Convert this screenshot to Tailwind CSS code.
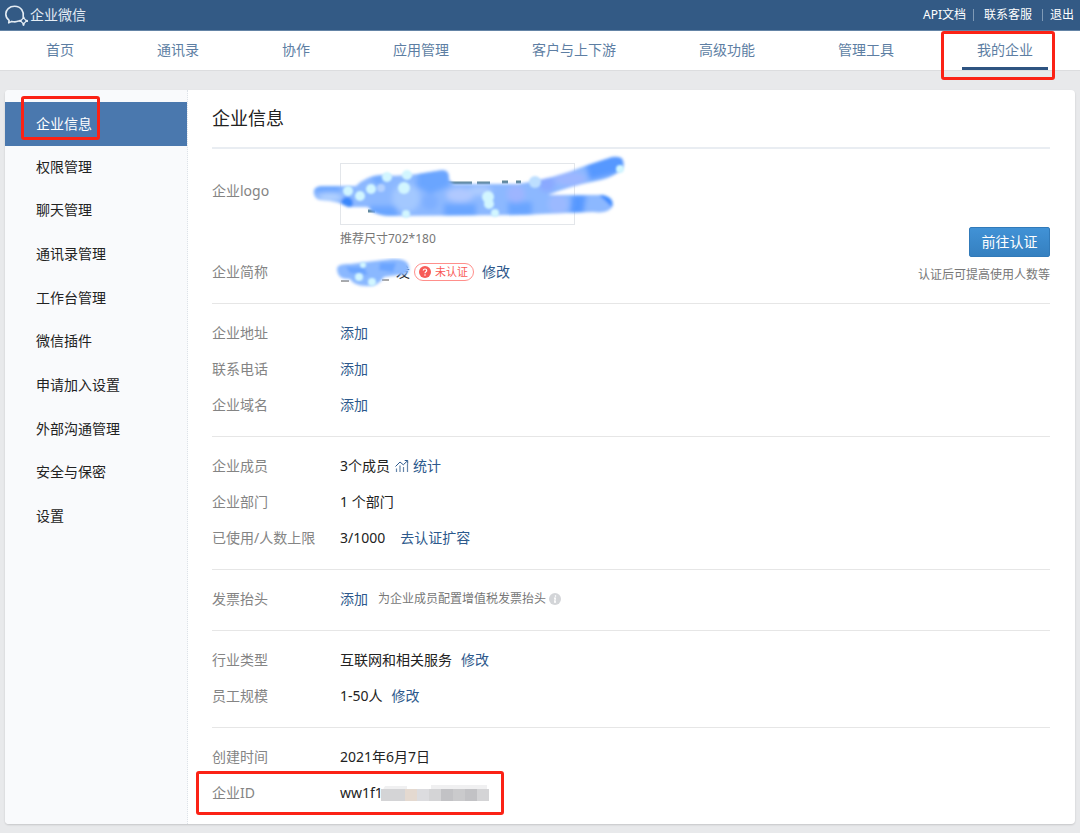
<!DOCTYPE html>
<html lang="zh-CN">
<head>
<meta charset="utf-8">
<meta name="viewport" content="width=device-width, initial-scale=1">
<title>企业微信 - 企业信息</title>
<script src="https://cdn.jsdelivr.net/npm/@tailwindcss/browser@4"></script>
</head>
<body class="min-h-screen bg-[#e8e9eb] font-['Noto_Sans','Noto_Sans_CJK_SC',sans-serif] text-sm text-[#222]">

<header>
  <div class="flex h-[31px] items-center justify-between border-b border-[#6484a6] bg-[#335a85] pl-1 pr-[6px] text-white">
    <a href="#" class="flex items-center gap-[2px] text-[#e4ecf4]">
      <svg class="h-6 w-6" viewBox="0 0 24 24" fill="none" stroke="currentColor" stroke-width="1.6" stroke-linecap="round" stroke-linejoin="round" aria-hidden="true">
        <path d="M19.200 13.500C20 9.200 17.500 3.300 10.600 3.300 5.300 3.300 1.800 6.800 1.800 11c0 2.700 1.300 4.900 3.300 6.300l-.4 2.600 3-1.500c2.200.6 4.800.6 7-.3"/>
        <path d="m19.500 14.900 3 3-3 3-3-3z" stroke-width="1.300"/>
        <path d="M19.500 14.500v.5M19.500 20.800v1M16 17.900h.5M22.600 17.900h.5" stroke-width="2.200"/>
      </svg>
      <span>企业微信</span>
    </a>
    <nav class="flex items-center text-xs" aria-label="账户">
      <a href="#">API文档</a>
      <span class="ml-[7px] mr-[10px] h-3 w-px bg-[#7f9ab6]"></span>
      <a href="#">联系客服</a>
      <span class="ml-[10px] mr-[7px] h-3 w-px bg-[#7f9ab6]"></span>
      <a href="#">退出</a>
    </nav>
  </div>
  <nav class="flex h-10 justify-between border-b border-[#dcdddf] bg-white pl-[46px] pr-[47px] leading-[38px] text-[#5d7ea3]" aria-label="主导航">
    <a href="#">首页</a>
    <a href="#">通讯录</a>
    <a href="#">协作</a>
    <a href="#">应用管理</a>
    <a href="#">客户与上下游</a>
    <a href="#">高级功能</a>
    <a href="#">管理工具</a>
    <a href="#" aria-current="page" class="relative">我的企业
      <span class="absolute -inset-x-[15px] bottom-0 h-[3px] bg-[#2e5481]"></span>
      <span class="absolute -left-9 -right-[22px] top-0 h-[49px] rounded-[3px] border-3 border-[#fb2215]"></span>
    </a>
  </nav>
</header>

<div class="mx-[5px] mt-[19px] mb-2 flex rounded bg-white shadow-[0_1px_2px_rgba(0,0,0,0.15)]">
  <aside class="w-[183px] shrink-0 rounded-l border-r border-dotted border-[#dde2e8] bg-[#f9fafc] pt-3">
    <ul class="grid h-[437px] grid-rows-10 text-[#222]">
      <li class="relative flex"><a href="#" aria-current="page" class="flex flex-1 items-center bg-[#4a78ae] pl-[31px] text-white">企业信息</a>
        <span class="absolute -top-[6px] left-4 h-11 w-[79px] rounded-[3px] border-3 border-[#fb2215]"></span>
      </li>
      <li class="flex"><a href="#" class="flex flex-1 items-center pb-0.5 pl-[31px]">权限管理</a></li>
      <li class="flex"><a href="#" class="flex flex-1 items-center pb-0.5 pl-[31px]">聊天管理</a></li>
      <li class="flex"><a href="#" class="flex flex-1 items-center pb-0.5 pl-[31px]">通讯录管理</a></li>
      <li class="flex"><a href="#" class="flex flex-1 items-center pb-0.5 pl-[31px]">工作台管理</a></li>
      <li class="flex"><a href="#" class="flex flex-1 items-center pb-0.5 pl-[31px]">微信插件</a></li>
      <li class="flex"><a href="#" class="flex flex-1 items-center pb-0.5 pl-[31px]">申请加入设置</a></li>
      <li class="flex"><a href="#" class="flex flex-1 items-center pb-0.5 pl-[31px]">外部沟通管理</a></li>
      <li class="flex"><a href="#" class="flex flex-1 items-center pb-0.5 pl-[31px]">安全与保密</a></li>
      <li class="flex"><a href="#" class="flex flex-1 items-center pb-0.5 pl-[31px]">设置</a></li>
    </ul>
  </aside>

  <main class="min-w-0 flex-1 pl-6 pr-[25px]">
    <h1 class="h-[59px] border-b-2 border-[#e9edf2] text-lg leading-[57px]">企业信息</h1>

    <section class="flex items-start justify-between border-b border-[#e6e6e6] pt-[14px] pb-[9px]">
      <dl>
        <div class="flex">
          <dt class="w-32 leading-[56px] text-[#848484]">企业logo</dt>
          <dd>
            <div class="relative h-[62px] w-[235px] border border-[#e3e6ea]">
              <svg class="absolute -left-[33px] -top-3 h-[78px] w-[324px]" viewBox="0 0 324 78" role="img" aria-label="企业logo">
                <defs>
                  <filter id="soft" x="-5%" y="-20%" width="110%" height="140%"><feGaussianBlur stdDeviation="1.600"/></filter>
                  <filter id="spot" x="-5%" y="-20%" width="110%" height="140%"><feGaussianBlur stdDeviation="0.800"/></filter>
                  <filter id="haze" x="-5%" y="-20%" width="110%" height="140%"><feGaussianBlur stdDeviation="2.200"/></filter>
                  <clipPath id="stroke"><path d="M6 42Q4 34 16 34L48 34Q58 24 72 23Q90 25 110 22L134 18Q142 18 141 28L146 32L210 32Q248 26 274 15L304 5Q318 3 315 15Q308 25 288 29Q262 34 240 43L295 43Q307 46 304 55Q300 62 285 60Q255 61 215 63L80 64Q65 63 60 55L40 55Q31 49 12 48Q7 47 6 42Z"/></clipPath>
                </defs>
                <path d="M60 59h7M137 31h27M169 31h13M194 30h6M208 30h5M230 44h7" stroke="#5f8698" stroke-width="3"/>
                <g filter="url(#soft)">
                  <path fill="#8cb8ff" d="M6 42Q4 34 16 34L48 34Q58 24 72 23Q90 25 110 22L134 18Q142 18 141 28L146 32L210 32Q248 26 274 15L304 5Q318 3 315 15Q308 25 288 29Q262 34 240 43L295 43Q307 46 304 55Q300 62 285 60Q255 61 215 63L80 64Q65 63 60 55L40 55Q31 49 12 48Q7 47 6 42Z"/>
                  <g clip-path="url(#stroke)">
                    <g filter="url(#haze)">
                      <path fill="#6ba5ff" d="M110 18h32v16l-20 8-14-8zM62 54h28v12H62zM136 52h32v14h-32zM6 33h26v7H6zM62 26l14-4-4 12zM200 50h24v14h-24z"/>
                      <circle cx="98" cy="46" r="14" fill="#a3c8ff"/>
                      <circle cx="122" cy="50" r="8" fill="#7eafff"/>
                      <ellipse cx="152" cy="43" rx="14" ry="7" fill="#b0c9ff"/>
                      <ellipse cx="172" cy="39" rx="12" ry="5" fill="#accbff"/>
                      <circle cx="208" cy="42" r="9" fill="#9db5ff"/>
                      <ellipse cx="262" cy="27" rx="16" ry="7" fill="#9cb6ff"/>
                      <circle cx="239" cy="32" r="8" fill="#8aa9ff"/>
                      <circle cx="250" cy="52" r="10" fill="#9bb9ff"/>
                      <ellipse cx="22" cy="45" rx="12" ry="4" fill="#b2d2ff"/>
                      <path fill="#5698ff" d="m276 8 42-7v18l-36 9zM264 43h14l-3 20h-13z"/>
                    </g>
                    <circle cx="39" cy="51" r="6" fill="#3a87fb"/>
                    <path fill="#3f8cff" d="M290 42h18v17z"/>
                  </g>
                </g>
                <g fill="#d2f6ff" filter="url(#spot)">
                  <circle cx="40" cy="39" r="5"/><circle cx="52" cy="44" r="5"/><circle cx="63" cy="37" r="5"/><circle cx="79" cy="25" r="5"/><circle cx="99" cy="23" r="5"/><circle cx="96" cy="36" r="6"/><circle cx="180" cy="45" r="6"/><circle cx="181" cy="52" r="5"/><circle cx="227" cy="30" r="6" fill="#bddfff"/><circle cx="98" cy="62" r="4"/><circle cx="187" cy="61" r="4"/><circle cx="73" cy="36" r="4" fill="#b5d2ff"/><circle cx="312" cy="17" r="4"/>
                </g>
              </svg>
            </div>
            <p class="pt-1 text-xs leading-5 text-[#777]">推荐尺寸702*180</p>
          </dd>
        </div>
        <div class="flex h-[45px] items-center">
          <dt class="w-32 text-[#848484]">企业简称</dt>
          <dd class="flex items-center">
            <span class="relative w-[70px] text-right">发
              <svg class="absolute -left-2 -top-1 h-8 w-[82px]" viewBox="0 0 82 32" role="img" aria-label="企业简称">
                <path d="M9 23h8M50 22h7" stroke="#555" stroke-width="1"/>
                <g filter="url(#soft)">
                  <path fill="#8ab8ff" d="M5 12Q4 5 18 6L60 1Q76 0 77 9Q78 19 66 17L52 19Q46 29 34 28Q22 28 18 21Q6 22 5 12Z"/>
                  <path fill="#6ca5ff" d="M14 9h18l4 8-18-2zM48 5h16l-3 9-14-2z"/>
                </g>
                <g fill="#d2f6ff" filter="url(#spot)"><circle cx="31" cy="7" r="3"/><circle cx="27" cy="19" r="4"/><circle cx="40" cy="24" r="4"/></g>
              </svg>
            </span>
            <span class="ml-1 flex h-[18px] w-[60px] items-center gap-1 rounded-full border border-[#ff8f8b] pl-1 text-[11px] text-[#f95a56]">
              <svg class="h-3 w-3 shrink-0" viewBox="0 0 12 12" aria-hidden="true"><circle cx="6" cy="6" r="6" fill="#f75c58"/><path d="M4.300 4.600C4.300 2.400 7.700 2.500 7.700 4.500 7.700 5.800 6 5.700 6 7.200" fill="none" stroke="#fff" stroke-width="1.200"/><circle cx="6" cy="9" r=".8" fill="#fff"/></svg>
              未认证
            </span>
            <a href="#" class="ml-2 text-[#2d598c]">修改</a>
          </dd>
        </div>
      </dl>
      <div class="mt-16 flex flex-col items-end">
        <button type="button" class="h-[30px] w-[81px] rounded-[2px] border border-[#317ab9] bg-linear-to-b from-[#4192d6] to-[#3580c0] text-white">前往认证</button>
        <p class="mt-2 text-xs leading-5 text-[#777]">认证后可提高使用人数等</p>
      </div>
    </section>

    <dl class="border-b border-[#e6e6e6] pt-[11px] pb-[13px]">
      <div class="flex h-9 items-center"><dt class="w-32 text-[#848484]">企业地址</dt><dd><a href="#" class="text-[#2d598c]">添加</a></dd></div>
      <div class="flex h-9 items-center"><dt class="w-32 text-[#848484]">联系电话</dt><dd><a href="#" class="text-[#2d598c]">添加</a></dd></div>
      <div class="flex h-9 items-center"><dt class="w-32 text-[#848484]">企业域名</dt><dd><a href="#" class="text-[#2d598c]">添加</a></dd></div>
    </dl>

    <dl class="border-b border-[#e6e6e6] pt-[11px] pb-[13px]">
      <div class="flex h-9 items-center"><dt class="w-32 text-[#848484]">企业成员</dt>
        <dd class="flex items-center">3个成员
          <a href="#" class="ml-[5px] flex items-center gap-1 text-[#2d598c]">
            <svg class="h-[14px] w-[14px]" viewBox="0 0 14 14" fill="none" stroke="currentColor" aria-hidden="true"><path d="M1.500 13V9.500M5 13V6.500M8.500 13V8M12.500 13V4.500" stroke="#6686ab" stroke-width="1.200"/><path d="M.5 7.500 5 3l3.300 2.800 4.200-4M9.700 1.500h3v3"/></svg>
            统计
          </a>
        </dd>
      </div>
      <div class="flex h-9 items-center"><dt class="w-32 text-[#848484]">企业部门</dt><dd>1 个部门</dd></div>
      <div class="flex h-9 items-center"><dt class="w-32 text-[#848484]">已使用/人数上限</dt><dd class="flex gap-[15px]">3/1000 <a href="#" class="text-[#2d598c]">去认证扩容</a></dd></div>
    </dl>

    <dl class="border-b border-[#e6e6e6] pt-[11px] pb-[13px]">
      <div class="flex h-9 items-center"><dt class="w-32 text-[#848484]">发票抬头</dt>
        <dd class="flex items-center"><a href="#" class="text-[#2d598c]">添加</a>
          <span class="ml-[10px] text-xs text-[#777]">为企业成员配置增值税发票抬头</span>
          <svg class="ml-[3px] h-3 w-3" viewBox="0 0 12 12" role="img" aria-label="说明"><circle cx="6" cy="6" r="6" fill="#d3d5d8"/><path d="M6.500 2.300v1.500M5 5.200h1.300L5.700 9h1.300" fill="none" stroke="#fff" stroke-width="1.300"/></svg>
        </dd>
      </div>
    </dl>

    <dl class="border-b border-[#e6e6e6] pt-[11px] pb-[13px]">
      <div class="flex h-9 items-center"><dt class="w-32 text-[#848484]">行业类型</dt><dd class="flex gap-[9px]">互联网和相关服务 <a href="#" class="text-[#2d598c]">修改</a></dd></div>
      <div class="flex h-9 items-center"><dt class="w-32 text-[#848484]">员工规模</dt><dd class="flex gap-[9px]">1-50人 <a href="#" class="text-[#2d598c]">修改</a></dd></div>
    </dl>

    <dl class="pt-[11px] pb-[13px]">
      <div class="flex h-9 items-center"><dt class="w-32 text-[#848484]">创建时间</dt><dd>2021年6月7日</dd></div>
      <div class="relative flex h-9 items-center"><dt class="w-32 text-[#848484]">企业ID</dt>
        <dd class="flex items-center">ww1f1
          <svg class="-ml-0.5 h-5 w-[108px]" viewBox="0 0 108 20" role="img" aria-label="已隐藏">
            <path fill="#f0f0f1" d="M4 3h22v4h24V2h56v8H0z"/>
            <path fill="#d4d4d6" d="M0 6h108v12H0z"/>
            <path fill="#e4d9d0" d="M24 6h12v12H24z"/><path fill="#dcdcdf" d="M36 6h12v12H36z"/>
            <path fill="#c2c2c5" d="M60 6h12v12H60zM84 6h12v12H84z"/><path fill="#cacacc" d="M72 6h12v12H72z"/>
          </svg>
        </dd>
        <span class="absolute -left-4 -top-1 h-11 w-[308px] rounded-[3px] border-3 border-[#fb2215]"></span>
      </div>
    </dl>
  </main>
</div>
</body>
</html>
